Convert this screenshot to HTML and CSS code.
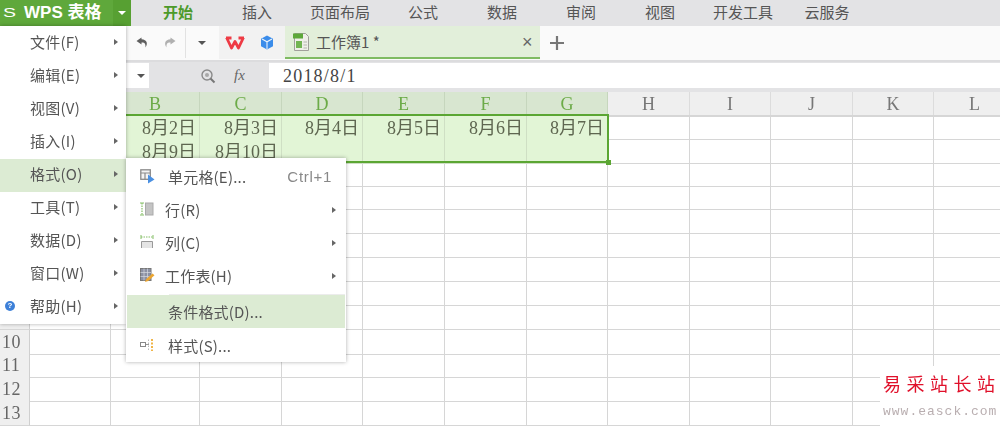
FILE: index.html
```html
<!DOCTYPE html>
<html lang="zh">
<head>
<meta charset="utf-8">
<title>WPS 表格</title>
<link rel="stylesheet" href="styles.css">
</head>
<body>
<div class="app">
  <header class="ribbon">
    <div class="logo">
      <span class="logo-s">S</span>
      <span class="logo-text">WPS 表格</span>
      <span class="logo-drop"><i class="caret caret-white"></i></span>
    </div>
    <nav class="tabs">
      <span class="tab tab-active">开始</span>
      <span class="tab">插入</span>
      <span class="tab tab-wide">页面布局</span>
      <span class="tab">公式</span>
      <span class="tab">数据</span>
      <span class="tab">审阅</span>
      <span class="tab">视图</span>
      <span class="tab tab-wide">开发工具</span>
      <span class="tab tab-mid">云服务</span>
    </nav>
  </header>

  <div class="docbar">
    <div class="quick">
      <svg width="14" height="14" viewBox="0 0 14 14"><path d="M6.500 1.500 1.500 5l5 3.500V6.500c2.500-.3 4.300.6 4 5 2.500-3.800 1.700-8-4-8.300z" fill="#5f5f5f"/></svg>
      <svg width="14" height="14" viewBox="0 0 14 14"><path d="M7.500 1.500 12.500 5l-5 3.500V6.500c-2.500-.3-4.300.6-4 5-2.500-3.800-1.700-8 4-8.300z" fill="#b0b0b0"/></svg>
      <span class="qsep"></span>
      <i class="caret caret-dark caret-quick"></i>
    </div>
    <div class="brand">
      <svg width="22" height="16" viewBox="0 0 22 16"><path d="M2.500 2.500 7.500 13 11 6.500 14.500 13l5-10.500M2 3h5.500M14.500 3H20" fill="none" stroke="#ee3b45" stroke-width="2.800" stroke-linejoin="round"/></svg>
      <svg width="14" height="15" viewBox="0 0 14 15"><path d="M7 .5l6 3.200v7.600l-6 3.200-6-3.200V3.700z" fill="#3a8cea"/><path d="M2 4l5 2.800L12 4M7 6.800V14" fill="none" stroke="#eaf3fc" stroke-width="1.100"/></svg>
    </div>
    <div class="doc">
      <svg width="18" height="20" viewBox="0 0 18 20"><path d="M2.500 1.500h11l3 3v14h-14z" fill="#efefe8" stroke="#a0a09a"/><rect x="1" y="1.500" width="10" height="5" fill="#5da83a"/><rect x="4" y="9" width="6" height="7" fill="#72b552"/><path d="M11.500 10h3.500M11.500 13h3.500M11.500 16h3.500" stroke="#b5b5ad"/></svg>
      <span class="doc-name">工作簿1 *</span>
      <span class="doc-close">×</span>
    </div>
    <span class="doc-add">
      <svg width="16" height="16" viewBox="0 0 16 16"><path d="M8 1v14M1 8h14" stroke="#777" stroke-width="2.200"/></svg>
    </span>
  </div>

  <div class="formula">
    <div class="namebox"><i class="caret caret-dark"></i></div>
    <div class="fx-tools">
      <svg width="16" height="16" viewBox="0 0 16 16"><circle cx="7" cy="7" r="5" fill="none" stroke="#8a8a8a" stroke-width="1.400"/><circle cx="7" cy="7" r="2" fill="#a8a8a8"/><path d="M10.500 10.500 14.500 14.500" stroke="#777" stroke-width="2"/></svg>
      <span class="fx">fx</span>
    </div>
    <div class="input">2018/8/1</div>
  </div>

  <section class="sheet">
    <div class="row row-head">
      <i class="corner"></i><b class="ch"></b><b class="ch ch-on">B</b><b class="ch ch-on">C</b><b class="ch ch-on">D</b><b class="ch ch-on">E</b><b class="ch ch-on">F</b><b class="ch ch-on">G</b><b class="ch">H</b><b class="ch">I</b><b class="ch">J</b><b class="ch">K</b><b class="ch">L</b>
    </div>
    <div class="row">
      <b class="rh"></b><i class="c"></i><i class="c c-on">8月2日</i><i class="c c-on">8月3日</i><i class="c c-on">8月4日</i><i class="c c-on">8月5日</i><i class="c c-on">8月6日</i><i class="c c-on">8月7日</i><i class="c"></i><i class="c"></i><i class="c"></i><i class="c"></i><i class="c"></i>
    </div>
    <div class="row">
      <b class="rh"></b><i class="c"></i><i class="c c-on">8月9日</i><i class="c c-on">8月10日</i><i class="c c-on"></i><i class="c c-on"></i><i class="c c-on"></i><i class="c c-on"></i><i class="c"></i><i class="c"></i><i class="c"></i><i class="c"></i><i class="c"></i>
    </div>
    <div class="row"><b class="rh"></b><i class="c"></i><i class="c"></i><i class="c"></i><i class="c"></i><i class="c"></i><i class="c"></i><i class="c"></i><i class="c"></i><i class="c"></i><i class="c"></i><i class="c"></i><i class="c"></i></div>
    <div class="row"><b class="rh"></b><i class="c"></i><i class="c"></i><i class="c"></i><i class="c"></i><i class="c"></i><i class="c"></i><i class="c"></i><i class="c"></i><i class="c"></i><i class="c"></i><i class="c"></i><i class="c"></i></div>
    <div class="row"><b class="rh"></b><i class="c"></i><i class="c"></i><i class="c"></i><i class="c"></i><i class="c"></i><i class="c"></i><i class="c"></i><i class="c"></i><i class="c"></i><i class="c"></i><i class="c"></i><i class="c"></i></div>
    <div class="row"><b class="rh"></b><i class="c"></i><i class="c"></i><i class="c"></i><i class="c"></i><i class="c"></i><i class="c"></i><i class="c"></i><i class="c"></i><i class="c"></i><i class="c"></i><i class="c"></i><i class="c"></i></div>
    <div class="row"><b class="rh"></b><i class="c"></i><i class="c"></i><i class="c"></i><i class="c"></i><i class="c"></i><i class="c"></i><i class="c"></i><i class="c"></i><i class="c"></i><i class="c"></i><i class="c"></i><i class="c"></i></div>
    <div class="row"><b class="rh"></b><i class="c"></i><i class="c"></i><i class="c"></i><i class="c"></i><i class="c"></i><i class="c"></i><i class="c"></i><i class="c"></i><i class="c"></i><i class="c"></i><i class="c"></i><i class="c"></i></div>
    <div class="row"><b class="rh"></b><i class="c"></i><i class="c"></i><i class="c"></i><i class="c"></i><i class="c"></i><i class="c"></i><i class="c"></i><i class="c"></i><i class="c"></i><i class="c"></i><i class="c"></i><i class="c"></i></div>
    <div class="row"><b class="rh">10</b><i class="c"></i><i class="c"></i><i class="c"></i><i class="c"></i><i class="c"></i><i class="c"></i><i class="c"></i><i class="c"></i><i class="c"></i><i class="c"></i><i class="c"></i><i class="c"></i></div>
    <div class="row"><b class="rh">11</b><i class="c"></i><i class="c"></i><i class="c"></i><i class="c"></i><i class="c"></i><i class="c"></i><i class="c"></i><i class="c"></i><i class="c"></i><i class="c"></i><i class="c"></i><i class="c"></i></div>
    <div class="row"><b class="rh">12</b><i class="c"></i><i class="c"></i><i class="c"></i><i class="c"></i><i class="c"></i><i class="c"></i><i class="c"></i><i class="c"></i><i class="c"></i><i class="c"></i><i class="c"></i><i class="c"></i></div>
    <div class="row"><b class="rh">13</b><i class="c"></i><i class="c"></i><i class="c"></i><i class="c"></i><i class="c"></i><i class="c"></i><i class="c"></i><i class="c"></i><i class="c"></i><i class="c"></i><i class="c"></i><i class="c"></i></div>
    <div class="selection"><i class="handle"></i></div>
  </section>

  <ul class="menu menu-main">
    <li class="mi"><span>文件(F)</span><i class="arrow"></i></li>
    <li class="mi"><span>编辑(E)</span><i class="arrow"></i></li>
    <li class="mi"><span>视图(V)</span><i class="arrow"></i></li>
    <li class="mi"><span>插入(I)</span><i class="arrow"></i></li>
    <li class="mi mi-on"><span>格式(O)</span><i class="arrow"></i></li>
    <li class="mi"><span>工具(T)</span><i class="arrow"></i></li>
    <li class="mi"><span>数据(D)</span><i class="arrow"></i></li>
    <li class="mi"><span>窗口(W)</span><i class="arrow"></i></li>
    <li class="mi"><em class="help">?</em><span>帮助(H)</span><i class="arrow"></i></li>
  </ul>

  <ul class="menu menu-sub">
    <li class="si">
      <svg class="sicon" width="15" height="15" viewBox="0 0 15 15"><rect x=".8" y=".8" width="9.500" height="9.500" fill="#f4f4f4" stroke="#8a8a8a" stroke-width="1.300"/><path d="M.8 4h9.500M5 4v6.300" stroke="#8a8a8a" stroke-width="1.200"/><path d="M8 5.500l6.500 5-6.500 4z" fill="#4a90e2"/></svg>
      <span class="st st-in">单元格(E)...</span><span class="key">Ctrl+1</span>
    </li>
    <li class="si">
      <svg class="sicon" width="14" height="14" viewBox="0 0 14 14"><path d="M2 1v12" fill="none" stroke="#86bf68" stroke-width="1.200" stroke-dasharray="1.500 1"/><path d="M0 1h4M0 13h4" stroke="#86bf68"/><rect x="5.500" y="1" width="7.500" height="12" fill="#c4c4c4" stroke="#aaa"/></svg>
      <span class="st">行(R)</span><i class="arrow"></i>
    </li>
    <li class="si">
      <svg class="sicon" width="14" height="14" viewBox="0 0 14 14"><path d="M1 2h12" fill="none" stroke="#86bf68" stroke-width="1.200" stroke-dasharray="1.500 1"/><path d="M1 0v4M13 0v4" stroke="#86bf68"/><path d="M1.500 13V6.500h11V13" fill="#e4e4e4" stroke="#999"/></svg>
      <span class="st">列(C)</span><i class="arrow"></i>
    </li>
    <li class="si">
      <svg class="sicon" width="15" height="15" viewBox="0 0 15 15"><rect x=".5" y=".5" width="10.500" height="12" fill="#8c91a3" stroke="#777"/><path d="M.5 4.500h10.500M.5 8.500h10.500M4 .5v12M7.500 .5v12" stroke="#d6d8e0" stroke-width=".7"/><path d="M5 14l1.200-3 6.300-5.500 2 1.800-6.300 5.700z" fill="#eba530"/></svg>
      <span class="st">工作表(H)</span><i class="arrow"></i>
    </li>
    <li class="sdiv"></li>
    <li class="si si-on"><span class="st st-in">条件格式(D)...</span></li>
    <li class="si si-last">
      <svg class="sicon" width="14" height="14" viewBox="0 0 14 14"><rect x=".5" y="4.500" width="5" height="4" fill="none" stroke="#888"/><path d="M6 6.500h3" stroke="#999"/><path d="M8.500 1.500v11" stroke="#bbb" stroke-dasharray="1.500 1.500"/><path d="M12 1v12" stroke="#efb54a" stroke-dasharray="2 1.500" stroke-width="2"/></svg>
      <span class="st st-in">样式(S)...</span>
    </li>
  </ul>

  <div class="watermark">
    <span class="wm-cn">易采站长站</span>
    <span class="wm-en">www.easck.com</span>
  </div>
</div>
</body>
</html>
```
FILE: styles.css
```css
* { box-sizing: border-box; margin: 0; padding: 0; }
html, body { width: 1000px; height: 426px; overflow: hidden; background: #fff; }
body { font-family: "Noto Sans CJK SC", "Liberation Sans", sans-serif; color: #555; }
i, em, b { font-style: normal; font-weight: normal; }
ul { list-style: none; }

.app { position: relative; width: 1000px; height: 426px; overflow: hidden; display: flex; flex-direction: column; filter: blur(.4px); }

/* title ribbon */
.ribbon { display: flex; height: 26px; background: #e3e3e5; flex: none; }
.logo { width: 131px; display: flex; align-items: center; background: #5fa83b; color: #fff; overflow: hidden; }
.logo-s { width: 24px; padding-left: 2px; font: 13px/24px "Liberation Sans", sans-serif; transform: scaleX(1.5); transform-origin: left center; }
.logo-text { width: 89px; font: bold 17px/22px "Liberation Sans", "Noto Sans CJK SC", sans-serif; white-space: nowrap; }
.logo-drop { width: 18px; height: 26px; background: #57a032; display: flex; align-items: center; justify-content: center; }
.tabs { display: flex; padding-left: 7.500px; font-size: 15px; line-height: 23px; color: #555; }
.tab { width: 79px; text-align: center; }
.tab-wide { width: 87px; }
.tab-mid { width: 81px; }
.tab-active { color: #4d9a2a; font-weight: 700; }

.caret { display: block; width: 0; height: 0; border-style: solid; border-width: 4px 4px 0; border-color: transparent; }
.caret-white { border-top-color: #fff; }
.caret-dark { border-top-color: #555; }
.caret-quick { margin-left: -2px; }

/* document tabs */
.docbar { display: flex; height: 36px; flex: none; padding-left: 127px; background: #fafafa; border-bottom: 2px solid #dcdcde; }
.quick { width: 92px; height: 33px; display: flex; align-items: center; padding-left: 8px; gap: 14px; }
.qsep { width: 1px; height: 30px; background: #e2e2e2; margin-left: -6px; }
.brand { width: 66px; height: 33px; display: flex; align-items: center; gap: 14px; padding-left: 5px; background: #f2f2f2; }
.doc { width: 255px; height: 33px; display: flex; align-items: center; padding-left: 7px; background: #e2efda; border-bottom: 2px solid #7fbb62; }
.doc-name { margin-left: 6px; font-size: 15px; flex: 1; }
.doc-close { width: 18px; font: 18px/1 "Liberation Sans", sans-serif; color: #666; }
.doc-add { width: 34px; height: 33px; display: flex; align-items: center; justify-content: center; }

/* formula bar */
.formula { display: flex; height: 30px; flex: none; padding: 1px 0 4px; background: #e3e3e5; }
.namebox { width: 149px; display: flex; align-items: center; justify-content: flex-end; padding-right: 4px; background: #fff; }
.fx-tools { width: 120px; display: flex; align-items: center; padding-left: 51px; gap: 18px; }
.fx { font: italic 15px "Liberation Serif", serif; color: #666; }
.input { flex: 1; background: #fff; padding: 1px 0 0 14px; font: 18px/25px "Liberation Serif", serif; color: #444; letter-spacing: 1.200px; }

/* sheet */
.sheet { position: relative; flex: 1; overflow: hidden; }
.row { display: grid; grid-template-columns: 30px 81px 89px 82px 81px 82px 82px 81px 82px 81px 82px 81px 82px; height: 23.850px; }
.row-head { height: 23px; background: #efefef; }
.corner, .ch { border-right: 1px solid #dcdcdc; border-bottom: 2px solid #d6d6d6; }
.ch { padding-top: 1px; font: 18px/22px "Liberation Serif", serif; text-align: center; color: #777; }
.ch-on { background: #d8e6d0; color: #6cab48; border-bottom-color: #5ba633; border-right-color: #c6d6bd; }
.rh { background: #efefef; border-right: 1px solid #cfcfcf; border-bottom: 1px solid #d6d6d6; padding: 1px 0 0 2px; font: 18px/23px "Liberation Serif", serif; letter-spacing: .5px; color: #666; }
.c { border-right: 1px solid #d6d6d6; border-bottom: 1px solid #d6d6d6; padding: 2px 3px 0 0; font: 18px/22px "Liberation Serif", "Noto Sans CJK SC", serif; color: #5e6650; text-align: right; white-space: nowrap; }
.c-on { background: #e2f5d6; border-color: #cfdfc4; }
.selection { position: absolute; left: 111px; top: 22px; width: 498px; height: 49px; border: 2px solid #5ba633; }
.handle { position: absolute; right: -4px; bottom: -4px; width: 5px; height: 5px; background: #5ba633; }

/* menus */
.menu { position: absolute; background: #fff; box-shadow: 0 0 4px rgba(0,0,0,.32); font-size: 15px; color: #555; }
.menu-main { left: 0; top: 26px; width: 126px; height: 298px; padding-top: .5px; }
.mi { position: relative; height: 33px; display: flex; align-items: center; padding: 0 0 3px 30px; letter-spacing: .25px; }
.mi-on { background: #dcebd3; }
.arrow { position: absolute; right: 8px; top: 13px; width: 0; height: 0; border-style: solid; border-width: 3.500px 0 3.500px 4px; border-color: transparent transparent transparent #666; }
.mi .arrow { top: 12px; }
.help { position: absolute; left: 5px; top: 10px; width: 10px; height: 10px; border-radius: 50%; background: #3d80d8; color: #fff; font: bold 8px/10px "Liberation Sans", sans-serif; text-align: center; }

.menu-sub { left: 126px; top: 158px; width: 220px; height: 204px; padding: 2px 1px 0; letter-spacing: .2px; }
.si { position: relative; height: 33px; display: flex; align-items: center; }
.si .arrow { right: 9px; top: 14px; }
.sicon { position: absolute; left: 13px; top: 9px; }
.st { margin-left: 38px; }
.st-in { margin-left: 41px; }
.key { margin-left: auto; padding-right: 13px; color: #888; font-family: "Liberation Sans", sans-serif; letter-spacing: .7px; }
.sdiv { height: 3px; margin-left: 42px; border-bottom: 1px solid #ececec; }
.si-on { background: #dcebd3; }
.si-last { margin-top: 1px; }

/* watermark */
.watermark { position: absolute; right: 0; bottom: 0; width: 120px; height: 60px; padding: 5px 0 0 3px; background: #fff; display: flex; flex-direction: column; }
.wm-cn { font: 18px/24px "Noto Sans CJK SC", sans-serif; color: #e0102a; letter-spacing: 5.500px; white-space: nowrap; }
.wm-en { font: 13px/20px "Liberation Mono", monospace; color: #b9aeb0; white-space: nowrap; letter-spacing: 1px; margin-top: 7px; }
```
